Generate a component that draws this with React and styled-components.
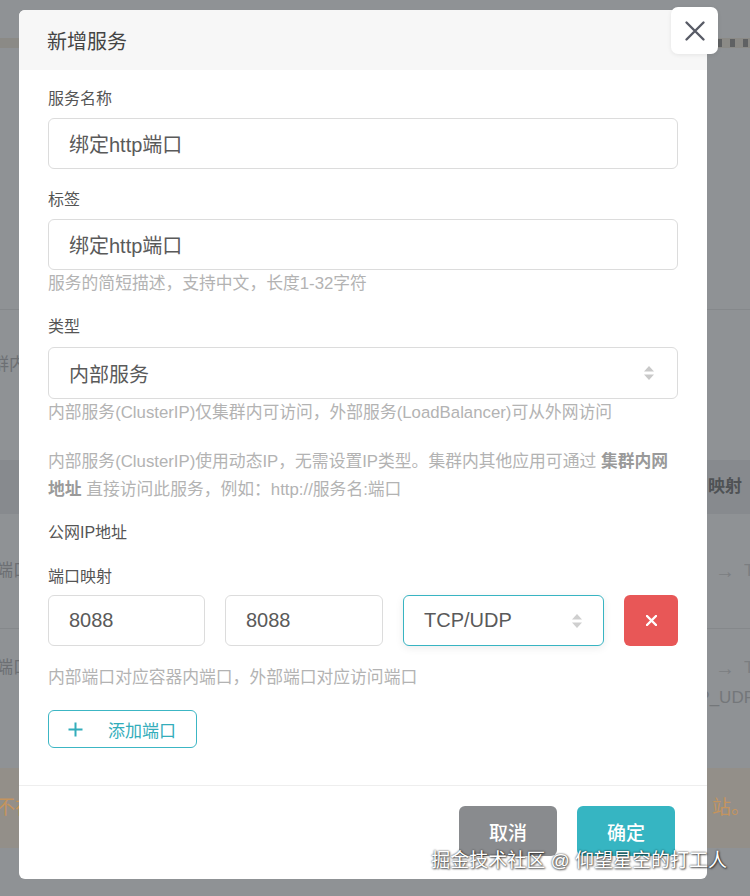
import React from "react";
import styled, { createGlobalStyle } from "styled-components";

const GlobalStyle = createGlobalStyle`
  html, body { margin: 0; padding: 0; }
  body {
    width: 750px;
    height: 896px;
    overflow: hidden;
    font-family: "Liberation Sans", "Noto Sans CJK SC", sans-serif;
  }
  * { box-sizing: border-box; }
`;

const Page = styled.div`
  position: relative;
  width: 750px;
  height: 896px;
  background: #8f9295;
  overflow: hidden;
`;

/* ---------- dimmed page behind the dialog ---------- */
const Backdrop = styled.div`
  display: flex;
  flex-direction: column;
  height: 100%;
  color: #6c6f73;
  font-size: 17px;
  line-height: 22px;
`;

const TopSpace = styled.div`
  height: 38px;
`;

const TabStrip = styled.div`
  height: 10px;
  background: #8b8a86;
  display: flex;
  justify-content: flex-end;
  align-items: center;
  gap: 8px;
  padding-right: 2px;
`;

const TabMark = styled.span`
  width: ${(p) => p.$w}px;
  height: 8px;
  background: #5f6163;
`;

const TopSection = styled.div`
  height: 262px;
  border-bottom: 1px solid #85888b;
`;

const InfoRow = styled.div`
  height: 150px;
  padding-top: 44px;
  margin-left: -8px;
`;

const TableHead = styled.div`
  height: 54px;
  background: #878a8e;
  display: flex;
  align-items: center;
  justify-content: flex-end;
  padding-right: 8px;
  color: #4f5255;
  font-weight: 600;
`;

const TableRow = styled.div`
  height: ${(p) => p.$h}px;
  border-bottom: ${(p) => (p.$line ? "1px solid #85888b" : "none")};
  display: flex;
  justify-content: space-between;
  align-items: ${(p) => (p.$top ? "flex-start" : "center")};
  padding-top: ${(p) => (p.$top ? "28px" : "0")};
  margin-left: -4px;
`;

const RightCell = styled.div`
  display: flex;
  flex-direction: column;
  align-items: flex-end;
  gap: 8px;
  color: #74777a;
  margin-right: -5px;
`;

const ArrowCell = styled.span`
  display: flex;
  align-items: center;
  gap: 9px;
  margin-right: ${(p) => p.$mr}px;
  color: #7b7e81;
`;

const Arrow = styled.span`
  font-size: 20px;
`;

const CutChar = styled.span`
  width: 6px;
  overflow: hidden;
  font-size: 17px;
`;

const Gap = styled.div`
  height: ${(p) => p.$h}px;
`;

const NoticeStrip = styled.div`
  height: 80px;
  background: #938f89;
  display: flex;
  align-items: center;
  justify-content: space-between;
  color: #c4945e;
  font-size: 19px;
  margin-left: -4px;
`;

/* ---------- dialog ---------- */
const Overlay = styled.div`
  position: absolute;
  inset: 0;
  padding: 10px 0 0 19px;
`;

const Modal = styled.div`
  position: relative;
  width: 688px;
  background: #fff;
  border-radius: 6px;
  display: flex;
  flex-direction: column;
`;

const Header = styled.div`
  height: 60px;
  background: #f7f7f7;
  border-radius: 6px 6px 0 0;
  display: flex;
  align-items: center;
  padding-left: 28px;
  font-size: 20px;
  color: #444;
`;

const CloseButton = styled.button`
  position: absolute;
  top: -3px;
  right: -11px;
  width: 47px;
  height: 47px;
  border: none;
  border-radius: 7px;
  background: #fff;
  box-shadow: 0 1px 4px rgba(0, 0, 0, 0.08);
  display: flex;
  align-items: center;
  justify-content: center;
  padding: 0;
  cursor: pointer;
`;

const Body = styled.div`
  padding: 18px 29px 37px;
  display: flex;
  flex-direction: column;
`;

const Field = styled.div`
  display: flex;
  flex-direction: column;
  margin-top: ${(p) => p.$mt || 0}px;
`;

const Label = styled.div`
  font-size: 16px;
  line-height: 22px;
  color: #555;
  margin-bottom: ${(p) => (p.$mb === undefined ? 8 : p.$mb)}px;
`;

const TextBox = styled.div`
  height: ${(p) => p.$h || 51}px;
  border: 1px solid ${(p) => (p.$active ? "#38b4c2" : "#dcdcdc")};
  border-radius: 6px;
  background: #fff;
  display: flex;
  align-items: center;
  justify-content: space-between;
  padding: 0 ${(p) => p.$pr || 20}px 0 20px;
  font-size: 20px;
  color: #5a5a5a;
  box-shadow: ${(p) => (p.$active ? "0 2px 8px rgba(0,0,0,0.08)" : "none")};
`;

const Help = styled.div`
  margin-top: ${(p) => p.$mt || 3}px;
  font-size: 16.8px;
  line-height: 22px;
  color: #b3b3b3;
`;

const Note = styled.div`
  margin-top: 24px;
  font-size: 16.8px;
  line-height: 28px;
  color: #b3b3b3;

  b {
    color: #9a9a9a;
    font-weight: 700;
  }
`;

const PortRow = styled.div`
  display: grid;
  grid-template-columns: 157px 158px 201px 54px;
  gap: 20px;
`;

const DeleteButton = styled.button`
  height: 51px;
  border: none;
  border-radius: 6px;
  background: #e85757;
  display: flex;
  align-items: center;
  justify-content: center;
  padding: 0;
`;

const AddButton = styled.button`
  margin-top: 21px;
  align-self: flex-start;
  width: 149px;
  height: 38px;
  border: 1px solid #3cb6c4;
  border-radius: 6px;
  background: #fff;
  display: flex;
  align-items: center;
  gap: 25px;
  padding: 0 0 0 19px;
  font-family: inherit;
  font-size: 17px;
  color: #33adbb;
`;

const Footer = styled.div`
  border-top: 1px solid #eeeeee;
  padding: 20px 32px 23px;
  display: flex;
  justify-content: flex-end;
  gap: 20px;
`;

const FooterButton = styled.button`
  width: 98px;
  height: 50px;
  border: none;
  border-radius: 6px;
  background: ${(p) => (p.$primary ? "#36b5c2" : "#898b8e")};
  color: #fff;
  font-family: inherit;
  font-size: 19px;
  font-weight: 500;
`;

const Watermark = styled.div`
  position: absolute;
  top: 848px;
  right: 23px;
  font-size: 19px;
  line-height: 26px;
  color: #fff;
  text-shadow: 0 0 2px rgba(0, 0, 0, 0.85), 1px 1px 2px rgba(0, 0, 0, 0.6);
  white-space: nowrap;
`;

const SortArrows = ({ color = "#c9c9c9" }) => (
  <svg width="12" height="18" viewBox="0 0 12 18">
    <path d="M6 2 L11 7.5 L1 7.5 Z" fill={color} />
    <path d="M6 16 L11 10.5 L1 10.5 Z" fill={color} />
  </svg>
);

const CloseIcon = () => (
  <svg width="22" height="22" viewBox="0 0 22 22">
    <path
      d="M2.5 2.5 L19.5 19.5 M19.5 2.5 L2.5 19.5"
      stroke="#585b66"
      strokeWidth="2.4"
      strokeLinecap="round"
    />
  </svg>
);

const XMark = () => (
  <svg width="11" height="11" viewBox="0 0 11 11">
    <path
      d="M1 1 L10 10 M10 1 L1 10"
      stroke="#fff"
      strokeWidth="2.4"
      strokeLinecap="round"
    />
  </svg>
);

const PlusIcon = () => (
  <svg width="15" height="15" viewBox="0 0 15 15">
    <path d="M7.5 0.5 V14.5 M0.5 7.5 H14.5" stroke="#33adbb" strokeWidth="2" />
  </svg>
);

export default function App() {
  return (
    <Page>
      <GlobalStyle />
      <Backdrop>
        <TopSpace />
        <TabStrip>
          <TabMark $w={14} />
          <TabMark $w={5} />
          <TabMark $w={5} />
        </TabStrip>
        <TopSection />
        <InfoRow>群内网地址</InfoRow>
        <TableHead>映射</TableHead>
        <TableRow $h={115} $line>
          <span>端口</span>
          <ArrowCell $mr={0}>
            <Arrow>→</Arrow>
            <CutChar>T</CutChar>
          </ArrowCell>
        </TableRow>
        <TableRow $h={109} $top>
          <span>端口</span>
          <RightCell>
            <ArrowCell $mr={5}>
              <Arrow>→</Arrow>
              <CutChar>T</CutChar>
            </ArrowCell>
            <span>P_UDP</span>
          </RightCell>
        </TableRow>
        <Gap $h={30} />
        <NoticeStrip>
          <span>不在</span>
          <span>站。</span>
        </NoticeStrip>
      </Backdrop>

      <Overlay>
        <Modal>
          <Header>新增服务</Header>
          <CloseButton aria-label="关闭">
            <CloseIcon />
          </CloseButton>

          <Body>
            <Field>
              <Label>服务名称</Label>
              <TextBox>绑定http端口</TextBox>
            </Field>

            <Field $mt={20}>
              <Label>标签</Label>
              <TextBox>绑定http端口</TextBox>
              <Help>服务的简短描述，支持中文，长度1-32字符</Help>
            </Field>

            <Field $mt={21}>
              <Label $mb={9}>类型</Label>
              <TextBox $h={52} $pr={22}>
                <span>内部服务</span>
                <SortArrows />
              </TextBox>
              <Help>内部服务(ClusterIP)仅集群内可访问，外部服务(LoadBalancer)可从外网访问</Help>
            </Field>

            <Note>
              内部服务(ClusterIP)使用动态IP，无需设置IP类型。集群内其他应用可通过 <b>集群内网地址</b> 直接访问此服务，例如：http://服务名:端口
            </Note>

            <Field $mt={18}>
              <Label $mb={0}>公网IP地址</Label>
            </Field>

            <Field $mt={22}>
              <Label $mb={7}>端口映射</Label>
              <PortRow>
                <TextBox>8088</TextBox>
                <TextBox>8088</TextBox>
                <TextBox $active $pr={20}>
                  <span>TCP/UDP</span>
                  <SortArrows color="#cfcfcf" />
                </TextBox>
                <DeleteButton aria-label="删除">
                  <XMark />
                </DeleteButton>
              </PortRow>
              <Help $mt={21}>内部端口对应容器内端口，外部端口对应访问端口</Help>
            </Field>

            <AddButton>
              <PlusIcon />
              <span>添加端口</span>
            </AddButton>
          </Body>

          <Footer>
            <FooterButton>取消</FooterButton>
            <FooterButton $primary>确定</FooterButton>
          </Footer>
        </Modal>
      </Overlay>

      <Watermark>掘金技术社区 @ 仰望星空的打工人</Watermark>
    </Page>
  );
}
